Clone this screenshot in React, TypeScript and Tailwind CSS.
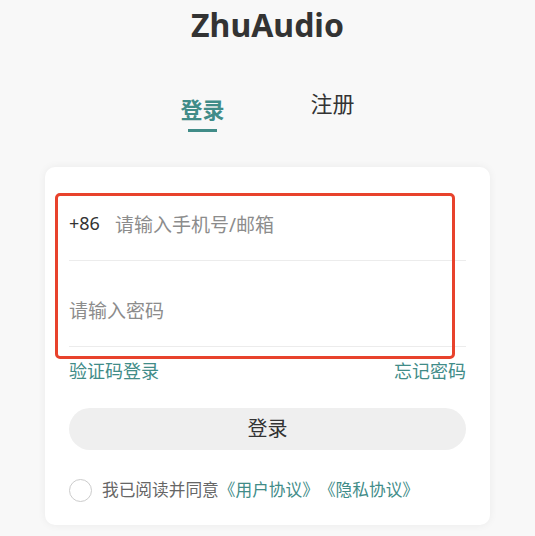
export default function App() {
  return (
    <div
      className="min-h-[536px] w-full bg-[#f8f8f8] pb-[12px]"
      style={{ fontFamily: '"Noto Sans", "Noto Sans CJK SC", sans-serif' }}
    >
      <h1 className="pt-[5px] text-center text-[32px] font-bold leading-[40px] text-[#333333]">
        ZhuAudio
      </h1>

      <div className="mt-[44px] flex items-start justify-center gap-[50px]">
        <div className="mt-[6px] flex w-[80px] flex-col items-center">
          <span className="text-[22px] font-bold leading-[28px] text-[#418c88]">登录</span>
          <span className="mt-[6px] h-[3px] w-[29px] bg-[#418c88]" />
        </div>
        <div className="flex w-[80px] justify-center">
          <span className="text-[22px] leading-[28px] text-[#333333]">注册</span>
        </div>
      </div>

      <div className="relative mx-[45px] mt-[35px] rounded-[10px] bg-white px-[24px] pt-[8px] pb-[23px] shadow-[0_0_8px_rgba(0,0,0,0.06)]">
        <div className="flex items-center border-b border-[#ececec] pt-[37px] pb-[22px]">
          <span className="-mt-[4px] text-[18px] leading-[26px] text-[#333333]">+86</span>
          <span className="ml-[15px] text-[19px] leading-[26px] text-[#8c8c8c]">请输入手机号/邮箱</span>
        </div>
        <div className="flex items-center border-b border-[#ececec] pt-[37px] pb-[22px]">
          <span className="text-[19px] leading-[26px] text-[#8c8c8c]">请输入密码</span>
        </div>

        <div className="mt-[12px] flex justify-between text-[18px] leading-[24px] text-[#418c88]">
          <span>验证码登录</span>
          <span>忘记密码</span>
        </div>

        <button className="mt-[25px] flex h-[42px] w-full items-center justify-center rounded-full bg-[#efefef] text-[20px] text-[#333333]">
          登录
        </button>

        <div className="mt-[28px] flex items-center">
          <span className="h-[23px] w-[23px] rounded-full border border-[#cccccc] bg-white" />
          <span className="ml-[10px] text-[16.7px] leading-[24px] text-[#666666] [text-spacing-trim:space-all]">
            我已阅读并同意
            <span className="text-[#418c88]">《用户协议》</span>
            <span className="text-[#418c88]">《隐私协议》</span>
          </span>
        </div>

        <div className="pointer-events-none absolute left-[10px] top-[26px] h-[166px] w-[400px] rounded-[5px] border-[3px] border-[#e8422c]" />
      </div>
    </div>
  );
}
